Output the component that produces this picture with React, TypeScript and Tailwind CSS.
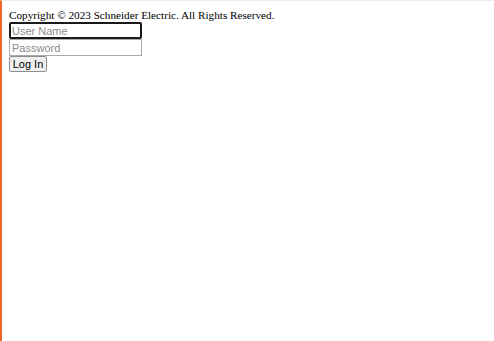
export default function App() {
  return (
    <div className="min-h-[341px] w-[494px] border-l-2 border-t border-l-[#f26522] border-t-[#ececec] bg-white">
      <div className="pl-[7px] pt-[7px]">
        <div className="font-['Liberation_Serif',serif] text-[11.2px] leading-[14px] text-black">
          Copyright © 2023 Schneider Electric. All Rights Reserved.
        </div>
        <form className="flex flex-col items-start" onSubmit={(e) => e.preventDefault()}>
          <input
            type="text"
            placeholder="User Name"
            className="h-[17px] w-[133px] rounded-[2px] border-2 border-[#1a1a1a] px-[1px] font-['Liberation_Sans',sans-serif] text-[11px] text-black outline-none placeholder:text-[#8a8a8a]"
          />
          <input
            type="password"
            placeholder="Password"
            className="h-[17px] w-[133px] border border-[#a9a9a9] px-[2px] font-['Liberation_Sans',sans-serif] text-[11px] text-black outline-none placeholder:text-[#8a8a8a]"
          />
          <button
            type="submit"
            className="h-[16px] w-[38px] rounded-[2px] border border-[#8f8f8f] bg-[#efefef] font-['Liberation_Sans',sans-serif] text-[11px] leading-none text-black"
          >
            Log In
          </button>
        </form>
      </div>
    </div>
  );
}
